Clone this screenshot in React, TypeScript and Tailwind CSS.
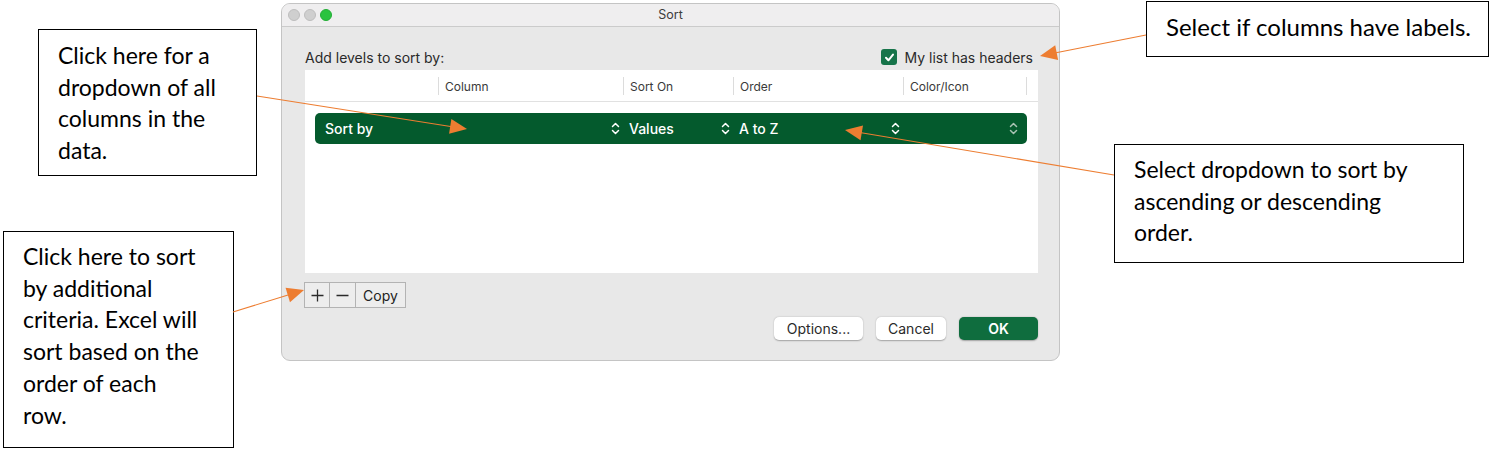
import React from "react";

const ORANGE = "#ED7D31";

function Arrow({ sx, sy, tx, ty }: { sx: number; sy: number; tx: number; ty: number }) {
  const dx = tx - sx;
  const dy = ty - sy;
  const len = Math.hypot(dx, dy);
  const ux = dx / len;
  const uy = dy / len;
  const L = 17;
  const W = 7.5;
  const bx = tx - ux * L;
  const by = ty - uy * L;
  const nx = -uy;
  const ny = ux;
  const pts = `${tx},${ty} ${bx + nx * W},${by + ny * W} ${bx - nx * W},${by - ny * W}`;
  return (
    <g>
      <line x1={sx} y1={sy} x2={bx + ux * 2} y2={by + uy * 2} stroke={ORANGE} strokeWidth={1.1} />
      <polygon points={pts} fill={ORANGE} />
    </g>
  );
}

function Chevron({ dim }: { dim?: boolean }) {
  return (
    <svg width="9" height="13" viewBox="0 0 9 13" fill="none" stroke={dim ? "#a9c2b3" : "#ffffff"} strokeWidth="1.5" strokeLinecap="round" strokeLinejoin="round">
      <path d="M1.5 4.5 L4.5 1.5 L7.5 4.5" />
      <path d="M1.5 8.5 L4.5 11.5 L7.5 8.5" />
    </svg>
  );
}

function HeaderCell({ w, label }: { w: string; label?: string }) {
  return (
    <div className={`${w} h-full flex items-center shrink-0`}>
      <div className="w-px h-[18px] bg-[#dcdcdc]" />
      {label && <span className="ml-[6px] pt-[2px]">{label}</span>}
    </div>
  );
}

export default function App() {
  return (
    <div className="relative w-[1497px] h-[449px] bg-white overflow-hidden">
      {/* Dialog window */}
      <div className="absolute left-[281px] top-[3px] w-[779px] h-[358px] rounded-[9px] border border-[#c4c4c4] bg-[#e8e8e8] overflow-hidden flex flex-col font-['Inter',sans-serif] text-[#2a2a2a]">
        <div className="relative h-[23px] shrink-0 bg-[#efeeef] border-b border-[#cbcbcb] flex items-center px-[6px]">
          <div className="flex gap-[4px] relative z-10">
            <div className="w-[12px] h-[12px] rounded-full bg-[#cfcfcf] border border-[#bdbdbd]" />
            <div className="w-[12px] h-[12px] rounded-full bg-[#cfcfcf] border border-[#bdbdbd]" />
            <div className="w-[12px] h-[12px] rounded-full bg-[#2ac33f] border border-[#22ad35]" />
          </div>
          <div className="absolute inset-0 flex items-center justify-center text-[12.5px] text-[#3c3c3c]">Sort</div>
        </div>

        <div className="flex flex-col pl-[23px] pr-[21px] pt-[19px]">
          <div className="h-[22px] flex items-center justify-between text-[14px]">
            <span className="pt-[1px]">Add levels to sort by:</span>
            <div className="flex items-center gap-[7px] mr-[5px]">
              <div className="w-[16px] h-[16px] rounded-[3px] bg-[#17744a] flex items-center justify-center">
                <svg width="11" height="11" viewBox="0 0 11 11" fill="none" stroke="#fff" strokeWidth="2" strokeLinecap="round" strokeLinejoin="round">
                  <path d="M2 5.8 L4.4 8.3 L9 2.6" />
                </svg>
              </div>
              <span className="pt-[1px]">My list has headers</span>
            </div>
          </div>

          <div className="mt-[2px] h-[203px] bg-white flex flex-col">
            <div className="h-[32px] border-b border-[#e1e1e1] flex text-[12px] text-[#3a3a3a] shrink-0">
              <div className="w-[133px] shrink-0" />
              <HeaderCell w="w-[185px]" label="Column" />
              <HeaderCell w="w-[110px]" label="Sort On" />
              <HeaderCell w="w-[170px]" label="Order" />
              <HeaderCell w="w-[123px]" label="Color/Icon" />
              <HeaderCell w="w-[12px]" />
            </div>
            <div className="mt-[11px] ml-[10px] w-[712px] h-[31px] rounded-[5px] bg-[#045a2d] flex text-white text-[14px] font-medium">
              <div className="w-[308px] flex items-center justify-between pl-[10px] pr-[3px]">
                <span>Sort by</span>
                <Chevron />
              </div>
              <div className="w-[110px] flex items-center justify-between pl-[6px] pr-[3px]">
                <span>Values</span>
                <Chevron />
              </div>
              <div className="w-[170px] flex items-center justify-between pl-[6px] pr-[3px]">
                <span>A to Z</span>
                <Chevron />
              </div>
              <div className="w-[124px] flex items-center justify-end pr-[9px]">
                <Chevron dim />
              </div>
            </div>
          </div>

          <div className="mt-[9px] -ml-px h-[26px] flex self-start border border-[#b3b3b3] bg-[#ededed] text-[14px] text-[#222]">
            <div className="w-[25px] flex items-center justify-center border-r border-[#b3b3b3]">
              <svg width="13" height="13" viewBox="0 0 13 13" stroke="#2a2a2a" strokeWidth="1.3">
                <path d="M6.5 0.5 V12.5 M0.5 6.5 H12.5" />
              </svg>
            </div>
            <div className="w-[26px] flex items-center justify-center border-r border-[#b3b3b3]">
              <svg width="13" height="13" viewBox="0 0 13 13" stroke="#2a2a2a" strokeWidth="1.3">
                <path d="M0.5 6.5 H12.5" />
              </svg>
            </div>
            <div className="w-[49px] flex items-center justify-center">Copy</div>
          </div>

          <div className="mt-[9px] flex justify-end gap-[13px] text-[14px]">
            <div className="w-[89px] h-[23px] rounded-[5px] bg-white shadow-[0_0.5px_1.5px_rgba(0,0,0,0.3)] flex items-center justify-center">Options...</div>
            <div className="w-[70px] h-[23px] rounded-[5px] bg-white shadow-[0_0.5px_1.5px_rgba(0,0,0,0.3)] flex items-center justify-center">Cancel</div>
            <div className="w-[79px] h-[23px] rounded-[5px] bg-[#0f6d3e] shadow-[0_0.5px_1.5px_rgba(0,0,0,0.3)] flex items-center justify-center text-white font-semibold">OK</div>
          </div>
        </div>
      </div>

      {/* Callout boxes */}
      <div className="absolute left-[38px] top-[29px] w-[219px] h-[147px] border-[1.5px] border-black bg-white pl-[19px] pt-[10px] font-['Lato',sans-serif] text-[23px] leading-[31.7px] text-black">
        <div>Click here for a</div>
        <div>dropdown of all</div>
        <div>columns in the</div>
        <div>data.</div>
      </div>

      <div className="absolute left-[3px] top-[231px] w-[231px] h-[217px] border-[1.5px] border-black bg-white pl-[19px] pt-[9px] font-['Lato',sans-serif] text-[23px] leading-[31.7px] text-black">
        <div>Click here to sort</div>
        <div>by additional</div>
        <div>criteria. Excel will</div>
        <div>sort based on the</div>
        <div>order of each</div>
        <div>row.</div>
      </div>

      <div className="absolute left-[1146px] top-[1px] w-[343px] h-[56px] border-[1.5px] border-black bg-white pl-[19px] pt-[9px] font-['Lato',sans-serif] text-[24px] leading-[31.7px] text-black">
        <div>Select if columns have labels.</div>
      </div>

      <div className="absolute left-[1114px] top-[144px] w-[350px] h-[119px] border-[1.5px] border-black bg-white pl-[19px] pt-[9px] font-['Lato',sans-serif] text-[23px] leading-[31.7px] text-black">
        <div>Select dropdown to sort by</div>
        <div>ascending or descending</div>
        <div>order.</div>
      </div>

      {/* Arrows */}
      <svg className="absolute inset-0 pointer-events-none" width="1497" height="449" viewBox="0 0 1497 449">
        <Arrow sx={257} sy={96} tx={467} ty={129} />
        <Arrow sx={1146} sy={35} tx={1040} ty={56} />
        <Arrow sx={1114} sy={175} tx={845} ty={130} />
        <Arrow sx={233} sy={312} tx={304} ty={290} />
      </svg>
    </div>
  );
}
